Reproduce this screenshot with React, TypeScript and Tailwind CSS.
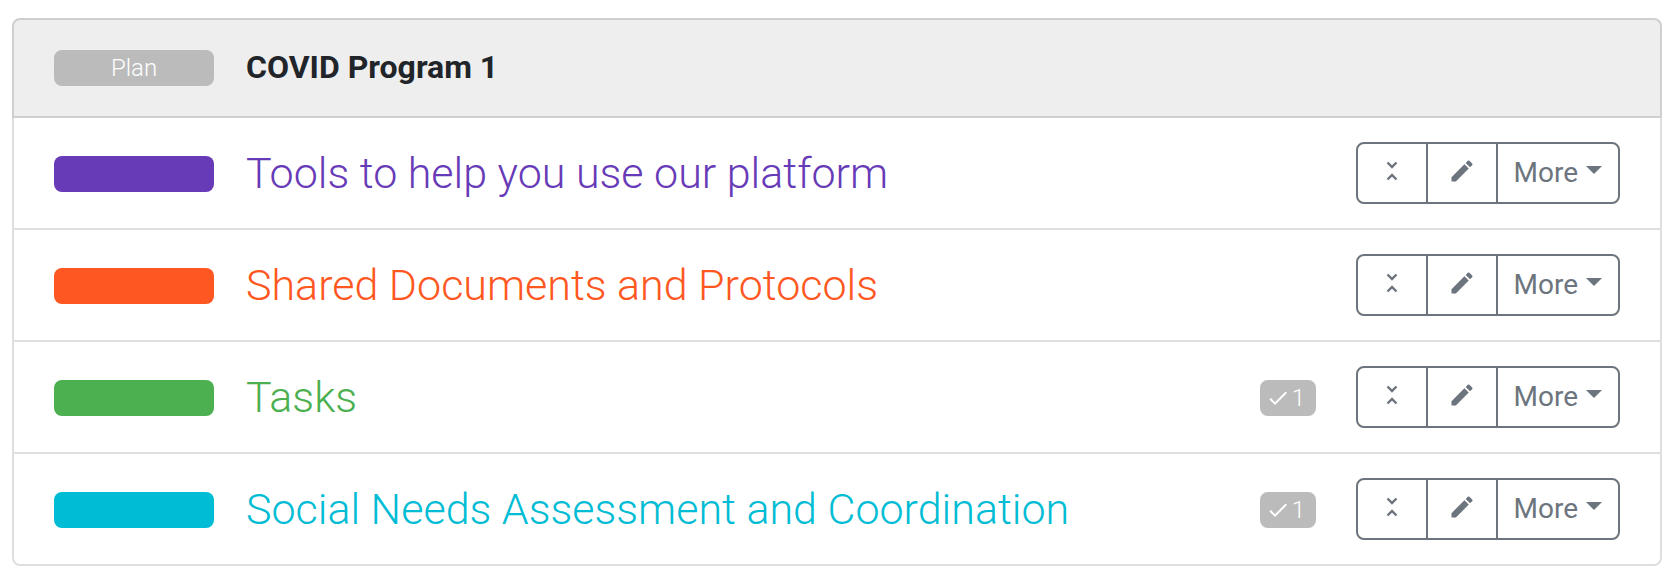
import { MdCheck, MdEdit, MdUnfoldLess } from "react-icons/md";

type Section = {
  title: string;
  text: string;
  swatch: string;
  tasks?: number;
};

const sections: Section[] = [
  { title: "Tools to help you use our platform", text: "text-[#673ab7]", swatch: "bg-[#673ab7]" },
  { title: "Shared Documents and Protocols", text: "text-[#ff5722]", swatch: "bg-[#ff5722]" },
  { title: "Tasks", text: "text-[#4caf50]", swatch: "bg-[#4caf50]", tasks: 1 },
  { title: "Social Needs Assessment and Coordination", text: "text-[#00bcd4]", swatch: "bg-[#00bcd4]", tasks: 1 },
];

function Actions() {
  return (
    <div
      role="group"
      className="flex h-[62px] shrink-0 divide-x-2 divide-[#6c757d] rounded-lg border-2 border-[#6c757d] text-[28px] leading-[42px] text-[#6c757d]"
    >
      <button type="button" aria-label="Collapse" className="flex w-[70px] items-center justify-center pb-1">
        <MdUnfoldLess size={28} />
      </button>
      <button type="button" aria-label="Edit" className="flex w-[70px] items-center justify-center pb-1">
        <MdEdit size={28} />
      </button>
      <button type="button" className="flex items-center gap-2 px-4">
        More
        <svg width="16" height="8" viewBox="0 0 16 8" fill="currentColor" className="mb-1.5" aria-hidden="true">
          <path d="M0 0h16L8 8z" />
        </svg>
      </button>
    </div>
  );
}

function SectionRow({ section }: { section: Section }) {
  return (
    <li className="flex h-28 items-center border-b-2 border-[#dfdfdf] px-10 last:h-[110px] last:border-b-0">
      <span className={`mt-0.5 h-9 w-40 shrink-0 rounded-lg ${section.swatch}`} />
      <h2 className={`ml-8 min-w-0 flex-1 text-[43px] leading-[52px] font-light ${section.text}`}>
        {section.title}
      </h2>
      {section.tasks !== undefined && (
        <span className="mt-0.5 mr-10 flex h-9 w-14 shrink-0 items-center justify-center gap-0.5 rounded-lg bg-[#bbb] pr-1 text-2xl leading-9 font-light text-white">
          <MdCheck size={24} />
          {section.tasks}
        </span>
      )}
      <Actions />
    </li>
  );
}

export default function App() {
  return (
    <main className="bg-white pt-[18px] pr-[18px] pb-4 pl-3 font-['Roboto',sans-serif] antialiased">
      <header className="flex h-[100px] items-center rounded-t-lg border-2 border-[#cfcfcf] bg-[#eee] px-10">
        <span className="h-9 w-40 shrink-0 rounded-lg bg-[#bbb] text-center text-2xl leading-9 font-light text-white">
          Plan
        </span>
        <h1 className="ml-8 pb-0.5 text-[32px] leading-10 font-bold text-[#212529]">COVID Program 1</h1>
      </header>
      <ul className="rounded-b-lg border-2 border-t-0 border-[#dfdfdf]">
        {sections.map((section) => (
          <SectionRow key={section.title} section={section} />
        ))}
      </ul>
    </main>
  );
}
